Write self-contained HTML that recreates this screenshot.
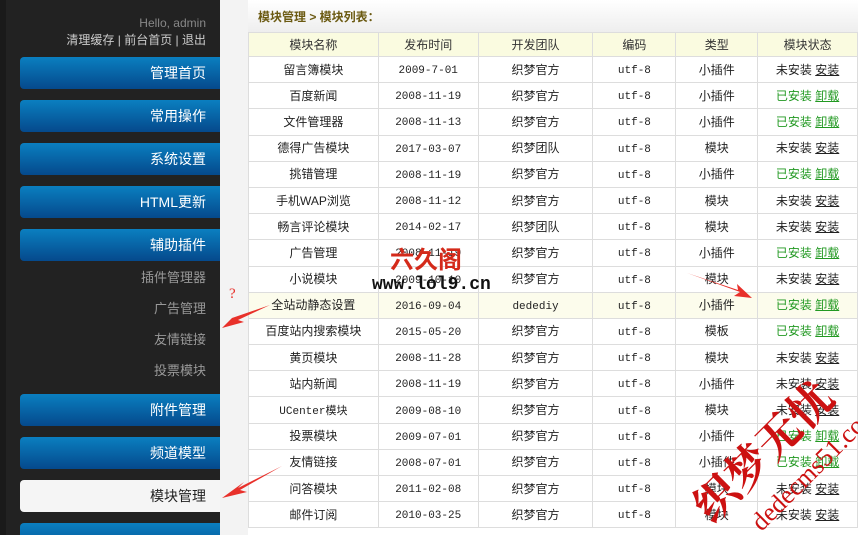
<!DOCTYPE html>
<html><head><meta charset="utf-8"><style>
*{margin:0;padding:0;box-sizing:border-box}
body{width:858px;height:535px;overflow:hidden;background:#fff;font-family:"Liberation Sans","Noto Sans CJK SC",sans-serif;position:relative}
#side{position:absolute;left:0;top:0;width:220px;height:535px;background:#222;overflow:hidden}
#side .edge{position:absolute;left:0;top:0;width:6px;height:535px;background:#1a1a1a}
.hello{position:absolute;right:14px;top:16px;color:#888;font-size:12px}
.links{position:absolute;right:14px;top:31px;color:#ccc;font-size:12px}
.btn{position:absolute;left:20px;width:200px;height:32px;border-radius:4px 0 0 4px;background:linear-gradient(#0a7fc0,#05498c);color:#fff;font-size:14px;text-align:right;padding-right:14px;line-height:32px}
.btn.act{background:#f5f5f5;color:#222}
.sub{position:absolute;right:14px;color:#999;font-size:13px}
#strip{position:absolute;left:220px;top:0;width:28px;height:535px;background:#f3f3f3}
#title{position:absolute;left:248px;top:0;width:610px;height:32px;background:linear-gradient(#fff,#eee);font-size:12px;font-weight:bold;color:#6b5a12;line-height:34px;padding-left:10px}
table{position:absolute;left:248px;top:32px;width:610px;border-collapse:collapse;font-size:12px;color:#222}
td,th{border:1px solid #ddd;text-align:center;font-weight:normal;height:26.2px;padding:0;line-height:14px;vertical-align:middle}
th{background:#fafbe0;height:24px;color:#333}
tr.hl td{background:#fcfcec}
td.m{font-family:"Liberation Mono","Noto Sans CJK SC",monospace;font-size:11px;padding-top:3px}
.g{color:#229922}
u{text-decoration:underline}
.g u{color:#229922}
svg{position:absolute;left:0;top:0}
</style></head><body>
<div id="side"><div class="edge"></div>
<div class="hello">Hello, admin</div>
<div class="links">清理缓存 | 前台首页 | 退出</div>
<div class="btn" style="top:57px">管理首页</div>
<div class="btn" style="top:100px">常用操作</div>
<div class="btn" style="top:143px">系统设置</div>
<div class="btn" style="top:186px">HTML更新</div>
<div class="btn" style="top:229px">辅助插件</div>
<div class="sub" style="top:267px">插件管理器</div>
<div class="sub" style="top:298px">广告管理</div>
<div class="sub" style="top:329px">友情链接</div>
<div class="sub" style="top:360px">投票模块</div>
<div class="btn" style="top:394px">附件管理</div>
<div class="btn" style="top:437px">频道模型</div>
<div class="btn act" style="top:480px">模块管理</div>
<div class="btn" style="top:523px"></div>
</div>
<div id="strip"></div>
<div id="title">模块管理 &gt; 模块列表：</div>
<table>
<colgroup><col style="width:130px"><col style="width:100px"><col style="width:115px"><col style="width:83px"><col style="width:82px"><col style="width:100px"></colgroup>
<tr><th>模块名称</th><th>发布时间</th><th>开发团队</th><th>编码</th><th>类型</th><th>模块状态</th></tr>
<tr><td>留言簿模块</td><td class="m">2009-7-01</td><td>织梦官方</td><td class="m">utf-8</td><td>小插件</td><td>未安装 <u>安装</u></td></tr>
<tr><td>百度新闻</td><td class="m">2008-11-19</td><td>织梦官方</td><td class="m">utf-8</td><td>小插件</td><td class="g">已安装 <u>卸载</u></td></tr>
<tr><td>文件管理器</td><td class="m">2008-11-13</td><td>织梦官方</td><td class="m">utf-8</td><td>小插件</td><td class="g">已安装 <u>卸载</u></td></tr>
<tr><td>德得广告模块</td><td class="m">2017-03-07</td><td>织梦团队</td><td class="m">utf-8</td><td>模块</td><td>未安装 <u>安装</u></td></tr>
<tr><td>挑错管理</td><td class="m">2008-11-19</td><td>织梦官方</td><td class="m">utf-8</td><td>小插件</td><td class="g">已安装 <u>卸载</u></td></tr>
<tr><td>手机WAP浏览</td><td class="m">2008-11-12</td><td>织梦官方</td><td class="m">utf-8</td><td>模块</td><td>未安装 <u>安装</u></td></tr>
<tr><td>畅言评论模块</td><td class="m">2014-02-17</td><td>织梦团队</td><td class="m">utf-8</td><td>模块</td><td>未安装 <u>安装</u></td></tr>
<tr><td>广告管理</td><td class="m">2008-11-19</td><td>织梦官方</td><td class="m">utf-8</td><td>小插件</td><td class="g">已安装 <u>卸载</u></td></tr>
<tr><td>小说模块</td><td class="m">2009-10-10</td><td>织梦官方</td><td class="m">utf-8</td><td>模块</td><td>未安装 <u>安装</u></td></tr>
<tr class="hl"><td>全站动静态设置</td><td class="m">2016-09-04</td><td class="m">dedediy</td><td class="m">utf-8</td><td>小插件</td><td class="g">已安装 <u>卸载</u></td></tr>
<tr><td>百度站内搜索模块</td><td class="m">2015-05-20</td><td>织梦官方</td><td class="m">utf-8</td><td>模板</td><td class="g">已安装 <u>卸载</u></td></tr>
<tr><td>黄页模块</td><td class="m">2008-11-28</td><td>织梦官方</td><td class="m">utf-8</td><td>模块</td><td>未安装 <u>安装</u></td></tr>
<tr><td>站内新闻</td><td class="m">2008-11-19</td><td>织梦官方</td><td class="m">utf-8</td><td>小插件</td><td>未安装 <u>安装</u></td></tr>
<tr><td class="m">UCenter模块</td><td class="m">2009-08-10</td><td>织梦官方</td><td class="m">utf-8</td><td>模块</td><td>未安装 <u>安装</u></td></tr>
<tr><td>投票模块</td><td class="m">2009-07-01</td><td>织梦官方</td><td class="m">utf-8</td><td>小插件</td><td class="g">已安装 <u>卸载</u></td></tr>
<tr><td>友情链接</td><td class="m">2008-07-01</td><td>织梦官方</td><td class="m">utf-8</td><td>小插件</td><td class="g">已安装 <u>卸载</u></td></tr>
<tr><td>问答模块</td><td class="m">2011-02-08</td><td>织梦官方</td><td class="m">utf-8</td><td>模块</td><td>未安装 <u>安装</u></td></tr>
<tr><td>邮件订阅</td><td class="m">2010-03-25</td><td>织梦官方</td><td class="m">utf-8</td><td>模块</td><td>未安装 <u>安装</u></td></tr>
</table>
<svg width="858" height="535">
<g fill="#e8302a">
<polygon points="270,305 232,318 238,312 222,328 244,322 238,320"/>
<polygon points="282,466 238,488 244,482 222,498 247,492 240,490"/>
<polygon points="687,273 740,292 734,296 752,298 737,284 738,290"/>
</g>
<text x="229" y="298" fill="#e8302a" font-size="15" font-family="Liberation Serif,serif">?</text>
<text x="390" y="268" fill="#d42a1a" font-size="24" font-weight="bold" font-family="Noto Sans CJK SC,sans-serif">六久阁</text>
<text x="372" y="289" fill="#111" font-size="18" font-weight="bold" font-family="Liberation Mono,monospace">www.lol9.cn</text>
<g transform="translate(712,525) rotate(-45)" fill="#cc1111">
<text x="0" y="0" font-size="44" font-family="Noto Serif CJK SC,serif" font-weight="bold">织梦无忧</text>
<text x="30" y="40" font-size="26" font-family="Liberation Serif,serif">dedecms51.com</text>
</g>
</svg>
</body></html>
